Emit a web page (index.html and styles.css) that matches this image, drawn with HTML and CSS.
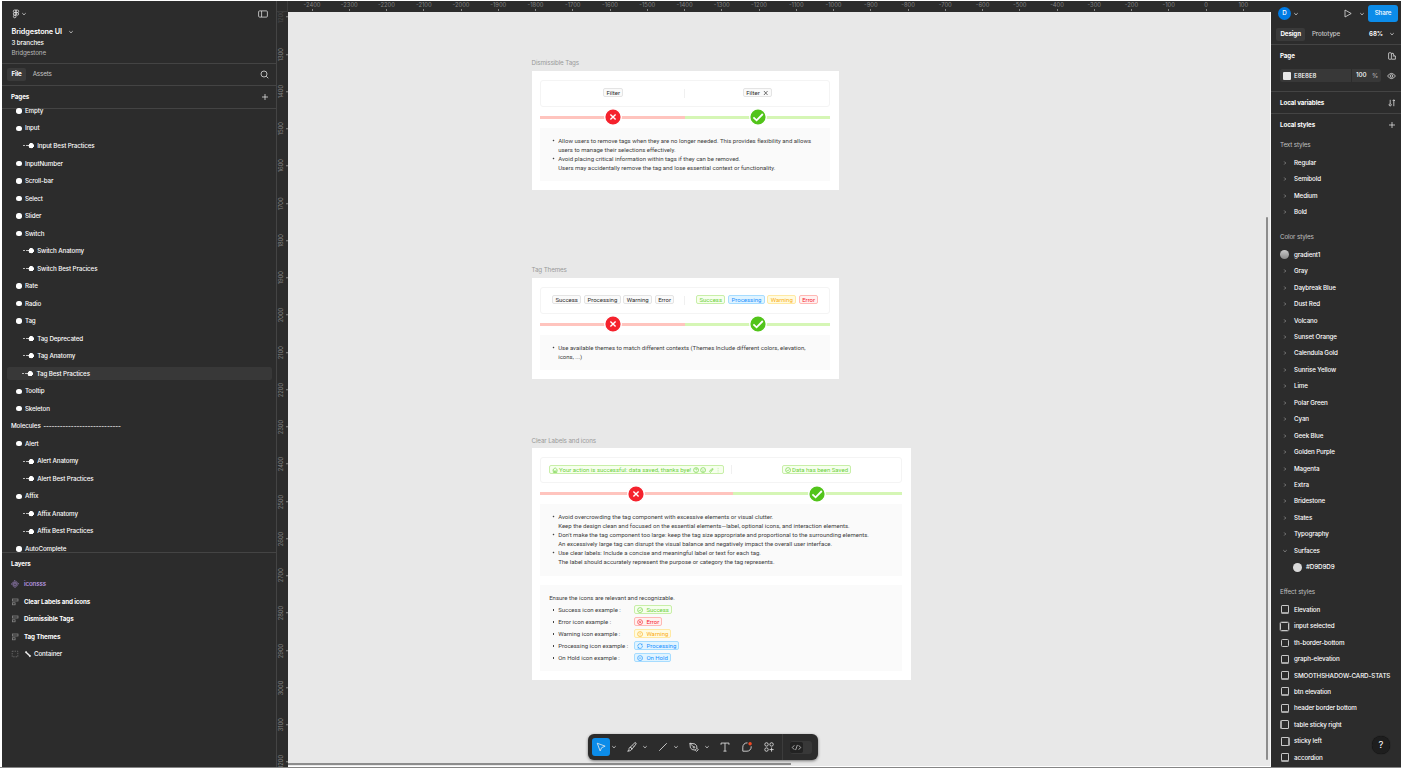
FILE: index.html
```html
<!DOCTYPE html>
<html lang="en">
<head>
<meta charset="utf-8">
<title>Bridgestone UI</title>
<link rel="stylesheet" href="styles.css">
</head>
<body>
<svg width="0" height="0" class="defs">
  <symbol id="down" viewBox="0 0 6 6"><path d="M1.3 2.2 3 3.8 4.7 2.2"/></symbol>
  <symbol id="right" viewBox="0 0 6 6"><path d="M2.2 1.5 3.7 3 2.2 4.5"/></symbol>
  <symbol id="plus" viewBox="0 0 8 8"><path d="M4 1v6M1 4h6"/></symbol>
  <symbol id="okc" viewBox="0 0 8 8"><circle cx="4" cy="4" r="3.2"/><path d="M2.5 4.1 3.6 5.2 5.6 2.9"/></symbol>
  <symbol id="errc" viewBox="0 0 8 8"><circle cx="4" cy="4" r="3.2"/><path d="M2.8 2.8 5.2 5.2M5.2 2.8 2.8 5.2"/></symbol>
  <symbol id="warnc" viewBox="0 0 8 8"><circle cx="4" cy="4" r="3.2"/><path d="M4 2.2v2.4M4 5.3v.6"/></symbol>
  <symbol id="syncc" viewBox="0 0 8 8"><path d="M1 4.6A3.1 3.1 0 0 1 6.4 2M7 3.4A3.1 3.1 0 0 1 1.6 6M6.6.9V2.3H5.2M1.4 7.1V5.7h1.4"/></symbol>
  <symbol id="holdc" viewBox="0 0 8 8"><circle cx="4" cy="4" r="3.2"/><path d="M2.4 4h3.2"/></symbol>
  <symbol id="homec" viewBox="0 0 8 8"><path d="M.8 4 4 1l3.2 3M1.7 3.4V7h4.6V3.4M3.2 7V5h1.6v2"/></symbol>
  <symbol id="auto" viewBox="0 0 8 8"><rect x="1.5" y="1" width="5.5" height="2"/><rect x="1.5" y="4.8" width="2.6" height="2"/></symbol>
</svg>
<div class="app">
  <aside class="left">
    <div class="head">
      <div class="toprow">
        <svg class="ic logo" viewBox="0 0 8 10"><path d="M2.6 1H4v2.6H2.6a1.3 1.3 0 0 1 0-2.6zM4 1h1.4a1.3 1.3 0 0 1 0 2.6H4zM2.6 3.6H4v2.6H2.6a1.3 1.3 0 0 1 0-2.6zM2.6 6.2H4v1.3a1.3 1.3 0 1 1-1.4-1.3z"/><circle cx="5.3" cy="4.9" r="1.3"/></svg>
        <svg class="ic c6"><use href="#down"/></svg>
        <svg class="ic pane" viewBox="0 0 10 8"><rect x=".6" y=".9" width="8.8" height="6.2" rx="1"/><path d="M3.6 1v6"/></svg>
      </div>
      <div class="file"><b>Bridgestone UI</b><svg class="ic c6"><use href="#down"/></svg></div>
      <div class="branches">3 branches</div>
      <div class="project">Bridgestone</div>
    </div>
    <div class="tabs"><span class="tab on">File</span><span class="tab">Assets</span>
      <svg class="ic find" viewBox="0 0 9 9"><circle cx="4" cy="4" r="3"/><path d="M6.2 6.2 8.3 8.3"/></svg></div>
    <div class="phead"><b>Pages</b><svg class="ic c8"><use href="#plus"/></svg></div>
    <div class="pages">
      <div class="pg">Empty</div>
      <div class="pg">Input</div>
      <div class="pg sub">Input Best Practices</div>
      <div class="pg">InputNumber</div>
      <div class="pg">Scroll-bar</div>
      <div class="pg">Select</div>
      <div class="pg">Slider</div>
      <div class="pg">Switch</div>
      <div class="pg sub">Switch Anatomy</div>
      <div class="pg sub">Switch Best Pracices</div>
      <div class="pg">Rate</div>
      <div class="pg">Radio</div>
      <div class="pg">Tag</div>
      <div class="pg sub">Tag Deprecated</div>
      <div class="pg sub">Tag Anatomy</div>
      <div class="pg sub sel">Tag Best Practices</div>
      <div class="pg">Tooltip</div>
      <div class="pg">Skeleton</div>
      <div class="pg plain">Molecules&nbsp; <span class="dash">----------------------------</span></div>
      <div class="pg">Alert</div>
      <div class="pg sub">Alert Anatomy</div>
      <div class="pg sub">Alert Best Practices</div>
      <div class="pg">Affix</div>
      <div class="pg sub">Affix Anatomy</div>
      <div class="pg sub">Affix Best Practices</div>
      <div class="pg">AutoComplete</div>
    </div>
    <div class="layers">
      <b class="ltitle">Layers</b>
      <div class="layer comp"><svg class="ic c8" viewBox="0 0 8 8"><path d="M4 .5 5.4 1.9 4 3.3 2.6 1.9zM4 4.7 5.4 6.1 4 7.5 2.6 6.1zM1.9 2.6 3.3 4 1.9 5.4.5 4zM6.1 2.6 7.5 4 6.1 5.4 4.7 4z"/></svg>iconsss</div>
      <div class="layer bold"><svg class="ic c8"><use href="#auto"/></svg>Clear Labels and icons</div>
      <div class="layer bold"><svg class="ic c8"><use href="#auto"/></svg>Dismissible Tags</div>
      <div class="layer bold"><svg class="ic c8"><use href="#auto"/></svg>Tag Themes</div>
      <div class="layer"><svg class="ic c8 group" viewBox="0 0 8 8"><rect x="1.2" y="1.2" width="5.6" height="5.6" stroke-dasharray="1.4 1"/></svg><svg class="ic bone" viewBox="0 0 8 8"><path d="M2 2.2 6 6"/><path d="M1.4 2.6 2.6 1.5M5.4 6.7 6.6 5.5"/></svg>Container</div>
    </div>
  </aside>

  <main class="stage">
    <div class="hruler"><i class="corner"></i><div class="hmarks">
      <span>-2400</span><span>-2300</span><span>-2200</span><span>-2100</span><span>-2000</span><span>-1900</span><span>-1800</span><span>-1700</span><span>-1600</span><span>-1500</span><span>-1400</span><span>-1300</span><span>-1200</span><span>-1100</span><span>-1000</span><span>-900</span><span>-800</span><span>-700</span><span>-600</span><span>-500</span><span>-400</span><span>-300</span><span>-200</span><span>-100</span><span>0</span><span>100</span></div></div>
    <div class="work">
      <div class="vruler"><span class="dim">1200</span><span>1300</span><span>1400</span><span>1500</span><span>1600</span><span>1700</span><span>1800</span><span>1900</span><span>2000</span><span>2100</span><span>2200</span><span>2300</span><span>2400</span><span>2500</span><span>2600</span><span>2700</span><span>2800</span><span>2900</span><span>3000</span><span>3100</span><span>3200</span></div>
      <div class="canvas">
        <section class="frame f1">
          <h2>Dismissible Tags</h2>
          <div class="card">
            <div class="demo"><div><span class="tag">Filter</span></div><div><span class="tag">Filter<svg class="ic x" viewBox="0 0 6 6"><path d="M1 .8l4 4.4M5 .8 1 5.2"/></svg></span></div></div>
            <div class="bars"><div class="bad"><svg viewBox="0 0 18 18"><circle cx="9" cy="9" r="8.3"/><path d="M6.4 6.4l5.2 5.2M11.6 6.4l-5.2 5.2"/></svg></div><div class="good"><svg viewBox="0 0 18 18"><circle cx="9" cy="9" r="8.3"/><path d="M4.4 9.4 7.6 12.3 13.8 6"/></svg></div></div>
            <div class="note"><ul><li>Allow users to remove tags when they are no longer needed. This provides flexibility and allows<br>users to manage their selections effectively.</li><li>Avoid placing critical information within tags if they can be removed.<br>Users may accidentally remove the tag and lose essential context or functionality.</li></ul></div>
          </div>
        </section>
        <section class="frame f2">
          <h2>Tag Themes</h2>
          <div class="card">
            <div class="demo"><div><span class="tag">Success</span><span class="tag">Processing</span><span class="tag">Warning</span><span class="tag">Error</span></div><div><span class="tag green">Success</span><span class="tag blue">Processing</span><span class="tag gold">Warning</span><span class="tag red">Error</span></div></div>
            <div class="bars"><div class="bad"><svg viewBox="0 0 18 18"><circle cx="9" cy="9" r="8.3"/><path d="M6.4 6.4l5.2 5.2M11.6 6.4l-5.2 5.2"/></svg></div><div class="good"><svg viewBox="0 0 18 18"><circle cx="9" cy="9" r="8.3"/><path d="M4.4 9.4 7.6 12.3 13.8 6"/></svg></div></div>
            <div class="note"><ul><li>Use available themes to match different contexts (Themes Include different colors, elevation,<br>icons, ...)</li></ul></div>
          </div>
        </section>
        <section class="frame f3">
          <h2>Clear Labels and icons</h2>
          <div class="card">
            <div class="demo"><div><span class="tag green long"><svg class="ic t"><use href="#homec"/></svg>Your action is successful: data saved, thanks bye!<svg class="ic t" viewBox="0 0 8 8"><circle cx="4" cy="4" r="3.2"/><path d="M3 3.2q0-1 1-1t1 1q0 .6-1 1.2M4 5.4v.6"/></svg><svg class="ic t" viewBox="0 0 8 8"><circle cx="4" cy="4" r="3.2"/><path d="M2.8 3v.6M5.2 3v.6M2.6 5q1.4 1.2 2.8 0"/></svg><svg class="ic t" viewBox="0 0 8 8"><path d="M2 5.5 5 2.2 6.6 2.4 6 4 3 7zM3.4 5.4 5.2 3.4"/></svg><svg class="ic t faint" viewBox="0 0 8 8"><path d="M4 1.2v1.2M4 3.6v1.2M4 6v1"/></svg></span></div><div><span class="tag green long"><svg class="ic t"><use href="#okc"/></svg>Data has been Saved</span></div></div>
            <div class="bars"><div class="bad"><svg viewBox="0 0 18 18"><circle cx="9" cy="9" r="8.3"/><path d="M6.4 6.4l5.2 5.2M11.6 6.4l-5.2 5.2"/></svg></div><div class="good"><svg viewBox="0 0 18 18"><circle cx="9" cy="9" r="8.3"/><path d="M4.4 9.4 7.6 12.3 13.8 6"/></svg></div></div>
            <div class="note"><ul><li>Avoid overcrowding the tag component with excessive elements or visual clutter.<br>Keep the design clean and focused on the essential elements—label, optional icons, and interaction elements.</li><li>Don't make the tag component too large: keep the tag size appropriate and proportional to the surrounding elements.<br>An excessively large tag can disrupt the visual balance and negatively impact the overall user interface.</li><li>Use clear labels: Include a concise and meaningful label or text for each tag.<br>The label should accurately represent the purpose or category the tag represents.</li></ul></div>
            <div class="note examples"><p>Ensure the icons are relevant and recognizable.</p>
              <ul>
                <li><span class="ex">Success icon example :</span><span class="tag green ico"><svg class="ic t"><use href="#okc"/></svg>Success</span></li>
                <li><span class="ex">Error icon example :</span><span class="tag red ico"><svg class="ic t"><use href="#errc"/></svg>Error</span></li>
                <li><span class="ex">Warning icon example :</span><span class="tag gold ico"><svg class="ic t"><use href="#warnc"/></svg>Warning</span></li>
                <li><span class="ex">Processing icon example :</span><span class="tag blue ico"><svg class="ic t"><use href="#syncc"/></svg>Processing</span></li>
                <li><span class="ex">On Hold icon example :</span><span class="tag blue ico"><svg class="ic t"><use href="#holdc"/></svg>On Hold</span></li>
              </ul></div>
          </div>
        </section>
        <div class="hscroll"></div><div class="vscroll"></div>
        <div class="toolbar">
          <span class="tool active"><svg class="ic" viewBox="0 0 14 14"><path d="M2.6 2.6 11.8 6 7.8 7.8 6 11.6z"/></svg></span><svg class="ic c6"><use href="#down"/></svg>
          <span class="tool"><svg class="ic" viewBox="0 0 14 14"><path d="M5 7.2 10.6 1.8q1.4.1 1.2 1.6L7.2 9.2zM5 7.2 7.2 9.2Q6 11.8 2 12 4 10 3.6 8.6 4 7.4 5 7.2M8.2 5.4l1.2 1.2"/></svg></span><svg class="ic c6"><use href="#down"/></svg>
          <span class="tool"><svg class="ic" viewBox="0 0 14 14"><path d="M2.6 11.4 11.4 2.6"/></svg></span><svg class="ic c6"><use href="#down"/></svg>
          <span class="tool"><svg class="ic" viewBox="0 0 14 14"><path d="M2.2 2.6 8 3.4Q11 5.2 10.4 8.6L8.4 10.6Q4.2 10.6 2.8 8zM2.2 2.6 6.3 6.8M10.4 8.6 12 10.2 10 12 8.4 10.6"/><circle cx="7" cy="7.4" r=".9"/></svg></span><svg class="ic c6"><use href="#down"/></svg>
          <span class="tool"><svg class="ic" viewBox="0 0 14 14"><path d="M2.4 4.4V2.4h9.2v2M7 2.4v9.4M5.2 11.8h3.6"/></svg></span>
          <span class="tool"><svg class="ic" viewBox="0 0 14 14"><path d="M7.6 2.2H7A4.9 4.9 0 0 0 2.1 7.2v4.7H7A4.9 4.9 0 0 0 11.9 7V6.2"/><circle class="dot" cx="10.6" cy="3.2" r="2"/></svg></span>
          <span class="tool"><svg class="ic" viewBox="0 0 14 14"><circle cx="4.1" cy="4" r="2"/><circle cx="10" cy="4" r="2"/><circle cx="4.1" cy="10" r="2"/><path d="M10 7.6v4.8M7.6 10h4.8"/></svg></span>
          <i class="sep"></i>
          <span class="dev"><svg class="ic" viewBox="0 0 12 12"><path d="M3.6 3.6 1.4 6l2.2 2.4M8.4 3.6 10.6 6 8.4 8.4M7 3.2 5 8.8"/></svg></span>
        </div>
      </div>
    </div>
  </main>

  <aside class="rightp">
    <div class="rtop"><span class="avatar">D</span><svg class="ic c6"><use href="#down"/></svg><svg class="ic play" viewBox="0 0 8 9"><path d="M1 1v7l6.2-3.5z"/></svg><svg class="ic c6"><use href="#down"/></svg><span class="share">Share</span></div>
    <div class="rtabs"><span class="tab on">Design</span><span class="tab">Prototype</span><b>68%</b><svg class="ic c6"><use href="#down"/></svg></div>
    <div class="pagebox">
      <div class="line"><b>Page</b><svg class="ic c8" viewBox="0 0 8 8"><rect x=".6" y=".8" width="2.8" height="6.4" rx=".5"/><path d="M3.4 2 5 1l1.2 3M4.8 4h2.6v3.2H3.4"/></svg></div>
      <div class="fill"><div class="field"><i class="chip"></i><span>E8E8E8</span><span class="pct">100</span><span class="unit">%</span></div><svg class="ic eye" viewBox="0 0 9 8"><path d="M.6 4Q2.3 1.4 4.5 1.4T8.4 4Q6.7 6.6 4.5 6.6T.6 4z"/><circle cx="4.5" cy="4" r="1.3"/></svg></div>
    </div>
    <div class="vars"><b>Local variables</b><svg class="ic c8" viewBox="0 0 8 8"><path d="M2.2.8v3.6M5.8 3.6v3.6M4.6 2 5.8.8 7 2M5.8.8v3"/><circle cx="2.2" cy="5.8" r="1.1"/></svg></div>
    <div class="styles">
      <div class="line"><b>Local styles</b><svg class="ic c8"><use href="#plus"/></svg></div>
      <div class="group-title g1">Text styles</div>
      <div class="st"><svg class="ic c6"><use href="#right"/></svg>Regular</div>
      <div class="st"><svg class="ic c6"><use href="#right"/></svg>Semibold</div>
      <div class="st"><svg class="ic c6"><use href="#right"/></svg>Medium</div>
      <div class="st"><svg class="ic c6"><use href="#right"/></svg>Bold</div>
      <div class="group-title g2">Color styles</div>
      <div class="st"><i class="ball grad"></i>gradient1</div>
      <div class="st"><svg class="ic c6"><use href="#right"/></svg>Gray</div>
      <div class="st"><svg class="ic c6"><use href="#right"/></svg>Daybreak Blue</div>
      <div class="st"><svg class="ic c6"><use href="#right"/></svg>Dust Red</div>
      <div class="st"><svg class="ic c6"><use href="#right"/></svg>Volcano</div>
      <div class="st"><svg class="ic c6"><use href="#right"/></svg>Sunset Orange</div>
      <div class="st"><svg class="ic c6"><use href="#right"/></svg>Calendula Gold</div>
      <div class="st"><svg class="ic c6"><use href="#right"/></svg>Sunrise Yellow</div>
      <div class="st"><svg class="ic c6"><use href="#right"/></svg>Lime</div>
      <div class="st"><svg class="ic c6"><use href="#right"/></svg>Polar Green</div>
      <div class="st"><svg class="ic c6"><use href="#right"/></svg>Cyan</div>
      <div class="st"><svg class="ic c6"><use href="#right"/></svg>Geek Blue</div>
      <div class="st"><svg class="ic c6"><use href="#right"/></svg>Golden Purple</div>
      <div class="st"><svg class="ic c6"><use href="#right"/></svg>Magenta</div>
      <div class="st"><svg class="ic c6"><use href="#right"/></svg>Extra</div>
      <div class="st"><svg class="ic c6"><use href="#right"/></svg>Bridestone</div>
      <div class="st"><svg class="ic c6"><use href="#right"/></svg>States</div>
      <div class="st"><svg class="ic c6"><use href="#right"/></svg>Typography</div>
      <div class="st"><svg class="ic c6"><use href="#down"/></svg>Surfaces</div>
      <div class="st nested"><i class="ball"></i>#D9D9D9</div>
      <div class="group-title g3">Effect styles</div>
      <div class="st"><i class="fx b"></i>Elevation</div>
      <div class="st"><i class="fx a"></i>input selected</div>
      <div class="st"><i class="fx s"></i>th-border-bottom</div>
      <div class="st"><i class="fx b"></i>graph-elevation</div>
      <div class="st"><i class="fx b"></i>SMOOTHSHADOW-CARD-STATS</div>
      <div class="st"><i class="fx b"></i>btn elevation</div>
      <div class="st"><i class="fx b"></i>header border bottom</div>
      <div class="st"><i class="fx l"></i>table sticky right</div>
      <div class="st"><i class="fx r"></i>sticky left</div>
      <div class="st"><i class="fx b"></i>accordion</div>
    </div>
    <div class="help">?</div>
  </aside>
</div>
</body>
</html>
```
FILE: styles.css
```css
* { box-sizing: border-box; }
body { margin: 0; width: 1401px; height: 768px; overflow: hidden; background: #fff; font-family: Inter, "Liberation Sans", sans-serif; font-size: 6.25px; letter-spacing: -.12px; line-height: 8px; color: #fff; }
b { font-weight: 700; }
.defs { position: absolute; }
.ic { fill: none; stroke: #e8e8e8; stroke-width: .75; flex: none; display: block; }
.c6 { width: 6px; height: 6px; }
.c8 { width: 8px; height: 8px; }
.app { display: flex; height: 768px; padding: 1px 0 0 2px; border-bottom: 1.5px solid #858585; }

/* left panel */
.left { width: 275px; flex: none; background: #2c2c2c; border-right: 1px solid #444; display: flex; flex-direction: column; }
.head { height: 63px; border-bottom: 1px solid #444; padding: 7px 8px 0 9.5px; }
.toprow { display: flex; align-items: center; height: 11px; }
.logo { width: 8px; height: 10px; margin-right: 1.5px; }
.pane { width: 10px; height: 8px; margin-left: auto; }
.file { display: flex; align-items: center; gap: 6.5px; font-size: 7.3px; height: 10px; margin-top: 7.5px; }
.file b { font-weight: 600; }
.branches { font-weight: 500; margin-top: 2px; }
.project { color: #b8b8b8; margin-top: 2.3px; }
.tabs { height: 22px; border-bottom: 1px solid #444; display: flex; align-items: center; padding: 0 7px 0 5px; }
.tab { height: 13px; line-height: 13px; padding: 0 4.4px; border-radius: 2px; color: #c8c8c8; margin-right: 2.2px; }
.tab.on { background: #3a3a3a; color: #fff; font-weight: 700; }
.find { width: 9px; height: 9px; margin-left: auto; }
.phead { height: 23px; border-bottom: 1px solid #444; flex: none; display: flex; align-items: center; justify-content: space-between; padding: 0 7.5px 0 9px; }
.pages { height: 447px; margin-top: -3px; padding-top: 3px; overflow: hidden; flex: none; border-bottom: 1px solid #444; }
.pg { height: 17.52px; display: flex; align-items: center; padding-left: 14.3px; font-weight: 500; }
.pg:first-child { margin-top: -6.8px; }
.pg::before { content: ""; width: 5.4px; height: 5.4px; border-radius: 50%; background: #fff; margin-right: 3.2px; }
.pg.sub { padding-left: 21px; }
.pg.sub::before { width: 11px; border-radius: 0; background: radial-gradient(circle at 8.2px 2.7px, #fff 2.4px, transparent 2.9px), linear-gradient(90deg, #bbb 0 2.2px, transparent 2.2px 3px, #bbb 3px 6px, transparent 6px) 0 2px / 100% 1px no-repeat; }
.pg.sel { height: 13px; margin: 2.26px 4.5px 2.26px 5px; border-radius: 2.5px; background: #383838; padding-left: 15.3px; }
.pg.plain { padding-left: 9px; }
.pg.plain::before { display: none; }
.dash { margin-left: 1px; white-space: pre; }
.layers { padding: 7.2px 9px; }
.ltitle { display: block; height: 15.2px; }
.layer { height: 17.55px; display: flex; align-items: center; font-weight: 500; gap: 5px; }
.layer .ic { stroke: #8a8a8a; }
.layer.bold { font-weight: 700; }
.layer.comp { color: #c2a0f0; }
.layer.comp .ic { stroke: #c9a6fa; stroke-width: .6; }
.layer .bone { width: 8px; height: 8px; margin-right: -3px; stroke: #f0f0f0; stroke-width: 1.5; }
.layer .group { stroke: #777; }

/* rulers and canvas */
.stage { flex: 1; min-width: 0; display: flex; flex-direction: column; }
.hruler { height: 11px; background: #2c2c2c; display: flex; overflow: hidden; flex: none; }
.corner { width: 11px; flex: none; border-right: 1px solid #3c3c3c; border-bottom: 1px solid #3c3c3c; }
.hmarks { display: flex; padding-left: 5.4px; }
.hmarks span, .vruler span { font-size: 5.8px; letter-spacing: 0; color: #858585; }
.hmarks span { width: 37.25px; flex: none; text-align: center; line-height: 8px; background: linear-gradient(#888, #888) 50% 8px / 1px 2px no-repeat; }
.work { flex: 1; display: flex; min-height: 0; }
.vruler { width: 11px; background: #2c2c2c; flex: none; overflow: hidden; }
.vruler span { display: block; height: 37.26px; width: 11px; writing-mode: vertical-rl; transform: rotate(180deg); text-align: center; line-height: 8px; background: linear-gradient(#888, #888) 0 50% / 2px 1px no-repeat; }
.vruler span:first-child { margin-top: -13.6px; }
.vruler .dim { color: #4c4c4c; }
.canvas { flex: 1; position: relative; background: #e8e8e8; border-right: 1px solid #f8f8f8; border-bottom: 1px solid #fff; overflow: hidden; }
.frame { position: absolute; left: 243.5px; font-family: Roboto, "Liberation Sans", sans-serif; letter-spacing: 0; color: #3c3c3c; font-size: 6.02px; line-height: 9px; width: 307.5px; }
.f1 { top: 46px; }
.f2 { top: 253px; }
.f3 { top: 423px; width: 379px; }
.frame h2 { margin: 0 0 3px; font: 400 6.25px/10px Inter, sans-serif; letter-spacing: -.12px; color: #999; }
.card { background: #fff; padding: 9px 8.7px; }
.f3 .card { padding-top: 8.6px; }
.f3 h2 { padding-top: .5px; margin-bottom: 2.5px; }
.demo { height: 26.5px; border: 1px solid #f4f4f4; border-radius: 3px; display: grid; grid-template-columns: 1fr 1fr; }
.demo > div { display: flex; align-items: center; justify-content: center; gap: 2.8px; }
.demo > div:first-child { background: linear-gradient(#f0f0f0, #f0f0f0) 100% 50% / 1px 9px no-repeat; }
.f3 .demo { grid-template-columns: 53fr 47fr; }
.tag { height: 9px; line-height: 7px; padding: 0 2.6px; border: 1px solid #e4e4e4; background: #fafafa; border-radius: 2px; display: flex; align-items: center; color: #2c2c2c; white-space: nowrap; }
.demo .tag { padding: 0 2.3px; margin-top: -1px; }
.f3 .demo .tag { padding: 0 2px; margin-top: 0; }
.tag .x { width: 5.5px; height: 6px; margin-left: 3px; stroke: #333; }
.t { width: 6.2px; height: 6.2px; stroke: currentColor; stroke-width: .8; }
.tag.long { gap: 1.4px; }
.tag.ico { gap: 3px; padding: 0 2px; }
.tag.green { color: #6cd03c; background: #f6ffed; border-color: #c8efa8; }
.tag.blue { color: #1890ff; background: #e0f4ff; border-color: #a6dcff; }
.tag.gold { color: #faad14; background: #fffbe0; border-color: #ffe9a3; }
.tag.red { color: #f5222d; background: #fff1f0; border-color: #ffb8b4; }
.faint { opacity: .5; }
.bars { display: grid; grid-template-columns: 1fr 1fr; height: 21px; }
.f3 .bars { grid-template-columns: 53.2fr 46.8fr; }
.bars > div { display: flex; align-items: center; justify-content: center; background: linear-gradient(#ffc4be, #ffc4be) 0 50% / 100% 3px no-repeat; }
.bars > .good { background-image: linear-gradient(#d5f6b5, #d5f6b5); }
.bars svg { width: 18px; height: 18px; fill: #f5222d; stroke: #fff; stroke-width: 1.4; }
.good svg { fill: #52c41a; }
.good svg path { fill: none; stroke-width: 1.8; }
.note { background: #fafafa; padding: 8.4px 9px 9.2px; white-space: nowrap; }
.note ul { margin: 0; padding: 0; list-style: none; }
.note li { padding-left: 9px; background: radial-gradient(circle at 4.5px 4.5px, #444 .6px, transparent 1.1px); }
.examples { margin-top: 9px; height: 86px; padding-top: 8.5px; }
.examples p { margin: 0 0 1.5px; }
.examples li { display: flex; align-items: center; height: 12px; background: radial-gradient(circle at 4.5px 6px, #444 .6px, transparent 1.1px); }
.ex { width: 76px; }
.hscroll { position: absolute; left: 0; bottom: 1px; width: 503px; height: 2px; background: #8c8c8c; }
.vscroll { position: absolute; right: 2px; top: 205px; width: 2px; height: 543px; border-radius: 1px; background: #8c8c8c; }
.toolbar { position: absolute; left: 299.5px; top: 722px; width: 230.5px; height: 26px; border-radius: 6px; background: #2c2c2c; box-shadow: 0 1px 3px rgba(0,0,0,.5); display: flex; align-items: center; padding-left: 4.5px; }
.tool { width: 17.5px; height: 17.5px; border-radius: 3px; display: flex; align-items: center; justify-content: center; flex: none; }
.toolbar .c6 { margin: 0 6px 0 1.6px; }
.tool .ic { width: 12px; height: 12px; stroke-width: .95; }
.tool.active { background: #0c8ce9; }
.tool + .tool { margin-left: 4.6px; }
.tool .dot { fill: #f24822; stroke: none; }
.sep { width: 1px; height: 26px; background: #3c3c3c; margin: 0 6.5px 0 4.2px; }
.dev { width: 22px; height: 13px; border-radius: 3px; background: #383838; display: flex; align-items: center; }
.dev .ic { width: 13px; height: 11px; background: #222; border-radius: 2px; }

/* right panel */
.rightp { width: 130px; flex: none; background: #2c2c2c; position: relative; overflow: hidden; font-weight: 500; }
.rtop { height: 24px; display: flex; align-items: center; padding: 1.5px 0 0 7px; }
.avatar { width: 13px; height: 13px; border-radius: 50%; background: #007be5; text-align: center; line-height: 13px; margin-right: 2px; }
.play { width: 8px; height: 9px; margin: 0 9px 0 45px; }
.play + .c6 { margin: 0 1px 0 -2px; }
.share { width: 30px; height: 17px; margin-left: 2px; border-radius: 3px; background: #0c8ce9; line-height: 17px; text-align: center; }
.rtabs { height: 20px; border-bottom: 1px solid #444; display: flex; align-items: center; padding: 0 6.5px 1px 5px; }
.rtabs b { margin: 0 5.5px 0 auto; font-weight: 600; }
.pagebox { height: 47px; border-bottom: 1px solid #444; padding: 0 5px 0 9px; }
.line { display: flex; justify-content: space-between; align-items: center; height: 22px; }
.fill { display: flex; align-items: center; height: 17px; justify-content: space-between; }
.field { width: 101px; height: 13px; background: #383838; border-radius: 2.5px; display: flex; align-items: center; padding-left: 3px; }
.chip { width: 8px; height: 8px; background: #e8e8e8; margin-right: 3px; border-radius: 1px; }
.pct { margin-left: auto; border-left: 1px solid #2c2c2c; line-height: 13px; padding-left: 4px; width: 21px; }
.unit { color: #aaa; width: 9px; }
.eye { width: 9px; height: 8px; }
.vars { height: 22px; border-bottom: 1px solid #444; display: flex; justify-content: space-between; align-items: center; padding: 0 5px 0 9px; }
.styles { padding: 0 5px 0 9px; }
.group-title { color: #c0c0c0; font-weight: 400; height: 8px; }
.g1 { margin: 5.2px 0 5.3px; }
.g2 { margin: 12.7px 0 5.7px; }
.g3 { margin: 12.4px 0 5.8px; }
.st { height: 16.45px; display: flex; align-items: center; white-space: nowrap; }
.st .c6 { margin: 0 6px 0 2px; stroke: #999; }
.ball { width: 9px; height: 9px; border-radius: 50%; background: #d9d9d9; margin-right: 5px; }
.grad { background: linear-gradient(#c8c8c8, #888); }
.nested { padding-left: 13px; }
.nested .ball { margin-right: 4px; }
.fx { width: 8px; height: 9px; margin: 0 5px 0 1px; border: 1px solid #c8c8c8; border-radius: 1.5px; flex: none; }
.fx.b { border-bottom: 2px solid #a8a8a8; }
.fx.s { height: 8px; }
.fx.a { width: 9px; margin: 0 5px 0 0; box-shadow: 0 0 0 .5px #888; }
.fx.l { width: 9px; margin-left: 0; border-left: 2px solid #a8a8a8; }
.fx.r { width: 9px; margin-right: 4px; border-right: 2px solid #a8a8a8; }
.help { position: absolute; left: 101px; top: 735px; width: 17.5px; height: 17.5px; border-radius: 50%; background: #1e1e1e; font-size: 9.5px; font-weight: 400; line-height: 17.5px; text-align: center; box-shadow: 0 0 1px #000; }
```
